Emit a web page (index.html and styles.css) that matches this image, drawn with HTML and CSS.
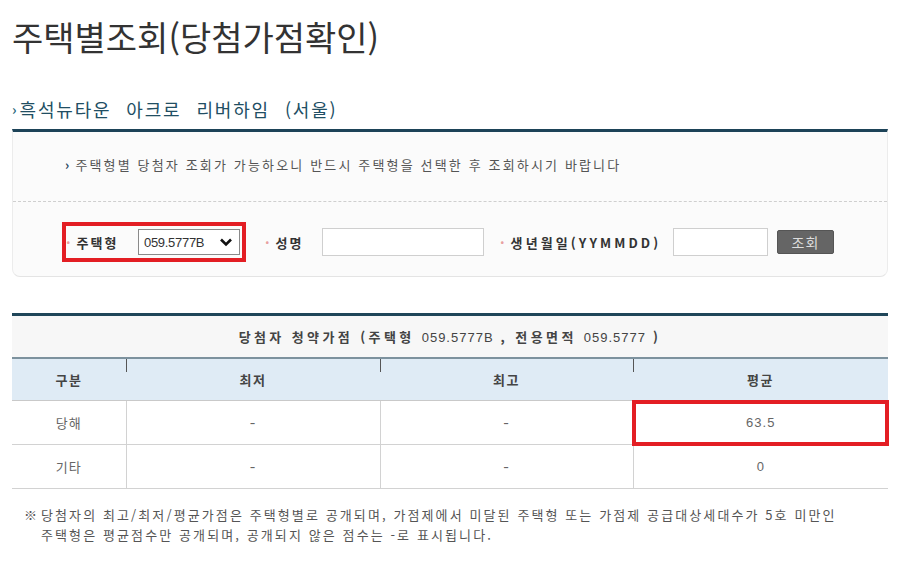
FILE: index.html
```html
<!DOCTYPE html>
<html lang="ko">
<head>
<meta charset="utf-8">
<title>주택별조회(당첨가점확인)</title>
<link rel="stylesheet" href="styles.css">
</head>
<body>
<div class="page">
  <h1 class="title">주택별조회(당첨가점확인)</h1>
  <h2 class="sub"><span class="sub-arrow">›</span><span class="w">흑석뉴타운</span><span class="w">아크로</span><span class="w">리버하임</span><span class="w">(서울)</span></h2>

  <div class="search">
    <p class="notice"><span class="notice-arrow">›</span>주택형별 당첨자 조회가 가능하오니 반드시 주택형을 선택한 후 조회하시기 바랍니다</p>
    <div class="form">
      <div class="hl-box">
        <span class="label"><span class="dot">·</span>주택형</span>
        <div class="select"><span class="num">059.5777B</span>
          <svg class="chev" width="14" height="10" viewBox="0 0 14 10"><path d="M2 2.5 L7 7.5 L12 2.5" fill="none" stroke="#111" stroke-width="2.6"/></svg>
        </div>
      </div>
      <span class="label l-name"><span class="dot">·</span>성명</span>
      <div class="input i-name"></div>
      <span class="label l-birth"><span class="dot">·</span>생년월일(YYMMDD)</span>
      <div class="input i-birth"></div>
      <div class="btn">조회</div>
    </div>
  </div>

  <table class="result">
    <thead>
      <tr class="cap"><th colspan="4">당첨자 청약가점 (주택형 <span class="num">059.5777B</span> , 전용면적 <span class="num">059.5777</span> )</th></tr>
      <tr class="head">
        <th class="c1">구분</th>
        <th class="c2 tick">최저</th>
        <th class="c3 tick">최고</th>
        <th class="c4 tick">평균</th>
      </tr>
    </thead>
    <tbody>
      <tr><td>당해</td><td class="dash">-</td><td class="dash">-</td><td class="hl num">63.5</td></tr>
      <tr><td>기타</td><td class="dash">-</td><td class="dash">-</td><td class="num">0</td></tr>
    </tbody>
  </table>

  <div class="foot">
    <span class="mark">※</span>
    <p>당첨자의 최고/최저/평균가점은 주택형별로 공개되며, 가점제에서 미달된 주택형 또는 가점제 공급대상세대수가 5호 미만인<br>주택형은 평균점수만 공개되며, 공개되지 않은 점수는 -로 표시됩니다.</p>
  </div>
</div>
</body>
</html>
```

FILE: styles.css
```css
* { box-sizing: border-box; }
html, body { margin: 0; padding: 0; background: #fff; }
body {
  font-family: "Noto Sans CJK KR", "Noto Sans", sans-serif;
  color: #444;
  width: 900px;
}
.page { padding: 0 12px; }

.title {
  margin: 14px 0 0;
  font-size: 34px;
  font-weight: 400;
  line-height: 46px;
  color: #333;
  letter-spacing: 0;
}

.sub {
  margin: 35px 0 0;
  font-size: 18px;
  font-weight: 400;
  line-height: 24px;
  height: 28px;
  color: #214e63;
  display: flex;
  align-items: center;
  letter-spacing: 1.8px;
}
.sub-arrow { font-size: 14px; color: #2d6a80; margin-right: 3px; font-weight: 700; letter-spacing: 0; }
.sub .w { margin-right: 15px; }

.search {
  margin-top: 6px;
  border-top: 3px solid #1d4358;
  background: #fbfbfb;
  border-left: 1px solid #ececec;
  border-right: 1px solid #ececec;
  border-bottom: 1px solid #e4e4e4;
  border-radius: 0 0 8px 8px;
}
.notice {
  margin: 0;
  padding: 24px 0 27px 52px;
  font-size: 13px;
  line-height: 18px;
  color: #555;
  letter-spacing: 2.15px;
  border-bottom: 1px dashed #cfcfcf;
}
.notice-arrow { color: #1d4358; font-weight: 700; margin-right: 4px; }

.form {
  display: flex;
  align-items: center;
  padding: 20px 0 14px 49px;
}
.hl-box {
  display: flex;
  align-items: center;
  border: 4px solid #e31e24;
  height: 40px;
  width: 184px;
  padding: 0 2px 0 0;
}
.label {
  font-size: 13px;
  font-weight: 700;
  color: #333;
  letter-spacing: 2px;
  display: flex;
  align-items: center;
}
.dot { color: #e8a0a0; font-weight: 700; margin-right: 6px; font-size: 14px; letter-spacing: 0; }
.hl-box .label { width: 72px; }
.select {
  width: 102px;
  height: 26px;
  border: 1px solid #8a8a8a;
  background: #fff;
  display: flex;
  align-items: center;
  justify-content: space-between;
  padding: 0 6px 0 5px;
  font-size: 13px;
  color: #333;
}
.num { font-family: "Liberation Sans", Arial, sans-serif; letter-spacing: -0.3px; }
.chev { display: block; }

.l-name { margin-left: 19px; width: 57px; }
.input {
  height: 28px;
  background: #fff;
  border: 1px solid #cfcfcf;
}
.i-name { width: 162px; }
.l-birth { margin-left: 16px; width: 173px; letter-spacing: 3.1px; }
.i-birth { width: 95px; }
.btn {
  margin-left: 9px;
  width: 57px;
  height: 24px;
  background: #656565;
  border: 1px solid #555;
  border-radius: 2px;
  color: #ddd;
  font-size: 14px;
  line-height: 22px;
  text-align: center;
  letter-spacing: 1px;
}

.result {
  margin-top: 36px;
  width: 876px;
  border-collapse: collapse;
  font-size: 13px;
  color: #555;
}
.result th, .result td { padding: 0; text-align: center; }
.cap th {
  border-top: 3px solid #1f4659;
  background: #f7f7f7;
  height: 43px;
  font-weight: 700;
  color: #444;
  letter-spacing: 3.4px;
}
.cap .num { font-weight: 400; letter-spacing: 1px; color: #444; }
.head th {
  border-top: 2px solid #7d929e;
  border-bottom: 1px solid #c9c9c9;
  background: #dfebf5;
  height: 43px;
  font-weight: 700;
  color: #444;
  position: relative;
  letter-spacing: 1.5px;
}
.head .tick::before {
  content: "";
  position: absolute;
  left: 0;
  top: 0;
  width: 1px;
  height: 13px;
  background: #555;
}
.c1 { width: 114px; }
.c2 { width: 254px; }
.c3 { width: 253px; }
.c4 { width: 255px; }
.result td {
  height: 44px;
  border-bottom: 1px solid #d2d2d2;
  border-left: 1px solid #d2d2d2;
  color: #666;
  letter-spacing: 1px;
}
.result td.dash { font-size: 16px; }
.result td:first-child { border-left: none; }
.result td.hl {
  outline: 4px solid #e31e24;
  outline-offset: -3px;
}

.foot {
  display: flex;
  margin-top: 16px;
  padding-left: 12px;
  font-size: 13px;
  color: #555;
}
.mark { width: 17px; line-height: 20px; }
.foot p { margin: 0; line-height: 20px; letter-spacing: 2.1px; }
```
